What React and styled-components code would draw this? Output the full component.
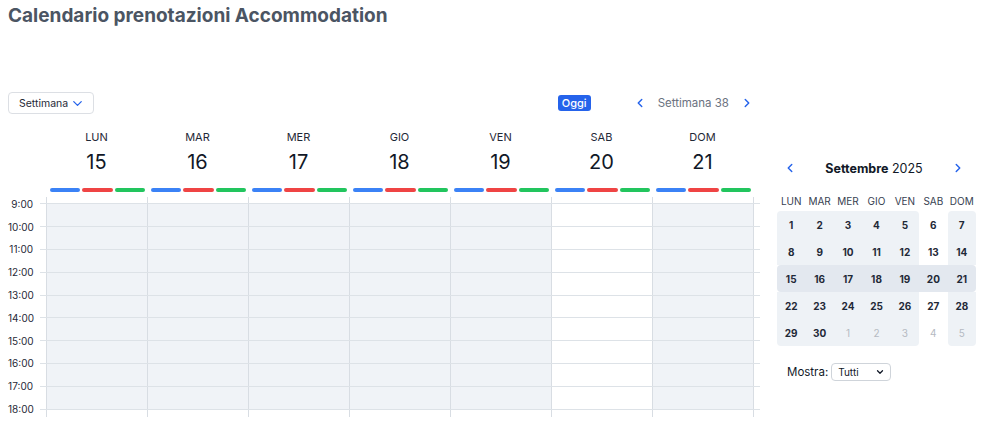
import React from 'react';
import styled, { createGlobalStyle } from 'styled-components';
import { ChevronDown, ChevronLeft, ChevronRight } from 'lucide-react';

const GlobalStyle = createGlobalStyle`
  body {
    margin: 0;
    background: #fff;
    font-family: Inter, "Noto Sans", "Liberation Sans", sans-serif;
    color: #111827;
  }
`;

const Page = styled.div`
  width: 984px;
  padding: 4px 8px 0;
  box-sizing: border-box;
`;

const Title = styled.h1`
  margin: 0;
  font-size: 19px;
  line-height: 24px;
  font-weight: 700;
  color: #4b5563;
`;

const Main = styled.div`
  display: flex;
  align-items: flex-start;
  gap: 17px;
  margin-top: 64px;
`;

const Schedule = styled.div`
  width: 752px;
`;

const Toolbar = styled.div`
  display: flex;
  align-items: center;
  height: 22px;
  padding-right: 6px;
`;

const ViewSelect = styled.div`
  display: flex;
  align-items: center;
  justify-content: space-between;
  width: 86px;
  height: 22px;
  box-sizing: border-box;
  padding: 0 8px 0 10px;
  border: 1px solid #dcdfe4;
  border-radius: 4px;
  font-size: 10.5px;
  color: #1f2937;
`;

const TodayButton = styled.button`
  margin-left: auto;
  height: 16px;
  padding: 0 4px;
  border: none;
  border-radius: 3px;
  background: #2563eb;
  color: #fff;
  font-family: inherit;
  font-size: 11px;
  font-weight: 500;
  line-height: 16px;
`;

const WeekNav = styled.div`
  display: flex;
  align-items: center;
  gap: 11px;
  margin-left: 42px;
  color: #2563eb;
`;

const WeekLabel = styled.span`
  font-size: 11.5px;
  color: #6b7280;
`;

const HeaderRow = styled.div`
  display: flex;
  margin-left: 38px;
`;

const DayHead = styled.div`
  width: 101px;
  padding-top: 16px;
  display: flex;
  flex-direction: column;
  align-items: center;
`;

const DayName = styled.div`
  font-size: 11px;
  line-height: 14px;
  color: #1f2937;
`;

const DayNumber = styled.div`
  margin-top: 6px;
  font-size: 20px;
  line-height: 24px;
  color: #111827;
`;

const Bars = styled.div`
  align-self: stretch;
  display: flex;
  gap: 2px;
  margin-top: 14px;
  padding: 0 2px 0 4px;
`;

const Bar = styled.div`
  flex: 1;
  height: 3.5px;
  border-radius: 2px;
  background: ${p => p.$color};
`;

const Body = styled.div`
  display: grid;
  margin-top: 1px;
  & > * {
    grid-area: 1 / 1;
  }
`;

const Columns = styled.div`
  display: flex;
  margin: 4px 0 3px 38px;
`;

const DayCol = styled.div`
  width: 101px;
  box-sizing: border-box;
  display: flex;
  flex-direction: column;
  border-left: 1px solid #d8dde3;
  &:last-child {
    width: 102px;
    border-right: 1px solid #d8dde3;
  }
`;

const Shade = styled.div`
  flex: 1;
  margin: 7px 0 8px;
  background: ${p => (p.$free ? 'transparent' : '#f0f3f7')};
`;

const Hours = styled.div`
  display: flex;
  flex-direction: column;
`;

const HourRow = styled.div`
  display: flex;
  align-items: center;
  height: 22.8px;
`;

const TimeLabel = styled.div`
  width: 32px;
  box-sizing: border-box;
  padding-right: 7px;
  text-align: right;
  font-size: 10px;
  color: #1f2937;
`;

const HourLine = styled.div`
  width: 720px;
  height: 1px;
  background: #dde2e7;
`;

const Side = styled.div`
  width: 199px;
  padding-top: 66px;
`;

const MonthHeader = styled.div`
  display: flex;
  align-items: center;
  justify-content: space-between;
  height: 20px;
  padding: 0 11px 0 6px;
  color: #2563eb;
`;

const MonthTitle = styled.div`
  font-size: 12.5px;
  color: #111827;
  b {
    font-weight: 700;
  }
`;

const WeekdayRow = styled.div`
  display: grid;
  grid-template-columns: repeat(7, 1fr);
  margin-top: 13px;
  font-size: 10px;
  line-height: 20px;
  text-align: center;
  color: #374151;
`;

const DaysGrid = styled.div`
  display: grid;
  grid-template-columns: repeat(7, 1fr);
  grid-auto-rows: 27px;
`;

const DayCell = styled.div`
  display: flex;
  align-items: center;
  justify-content: center;
  font-size: 10px;
  font-weight: ${p => (p.$muted ? 400 : 700)};
  color: ${p => (p.$muted ? '#b5bac2' : '#1f2937')};
  background: ${p => p.$bg};
  border-radius: ${p => p.$radius};
`;

const FilterRow = styled.div`
  display: flex;
  align-items: center;
  gap: 3px;
  margin-top: 17px;
  padding-left: 10px;
  font-size: 11.5px;
  color: #111827;
`;

const FilterSelect = styled.div`
  display: flex;
  align-items: center;
  justify-content: space-between;
  width: 60px;
  height: 18px;
  box-sizing: border-box;
  padding: 0 5px 0 6px;
  border: 1px solid #cfd4da;
  border-radius: 4px;
  font-size: 10px;
  color: #111827;
`;

const days = [
  ['LUN', 15], ['MAR', 16], ['MER', 17], ['GIO', 18],
  ['VEN', 19], ['SAB', 20], ['DOM', 21],
];

const hours = ['9:00', '10:00', '11:00', '12:00', '13:00', '14:00', '15:00', '16:00', '17:00', '18:00'];

const weeks = [
  [1, 2, 3, 4, 5, 6, 7],
  [8, 9, 10, 11, 12, 13, 14],
  [15, 16, 17, 18, 19, 20, 21],
  [22, 23, 24, 25, 26, 27, 28],
  [29, 30, -1, -2, -3, -4, -5],
];

function cellStyle(row, col) {
  if (row === 2) {
    const r = col === 0 ? '4px 0 0 4px' : col === 6 ? '0 4px 4px 0' : '0';
    return { bg: '#e3e8ef', radius: r };
  }
  if (col === 5) return { bg: '#fff', radius: '0' };
  const top = row === 0;
  const bottom = row === 4;
  let tl = 0, tr = 0, br = 0, bl = 0;
  if (top && (col === 0 || col === 6)) tl = 4;
  if (top && (col === 4 || col === 6)) tr = 4;
  if (bottom && (col === 0 || col === 6)) bl = 4;
  if (bottom && (col === 4 || col === 6)) br = 4;
  return { bg: '#eef2f6', radius: `${tl}px ${tr}px ${br}px ${bl}px` };
}

const App = () => {
  return (
    <Page>
      <GlobalStyle />
      <Title>Calendario prenotazioni Accommodation</Title>
      <Main>
        <Schedule>
          <Toolbar>
            <ViewSelect>
              Settimana
              <ChevronDown size={15} strokeWidth={2} color="#2563eb" />
            </ViewSelect>
            <TodayButton>Oggi</TodayButton>
            <WeekNav>
              <ChevronLeft size={14} strokeWidth={2.5} />
              <WeekLabel>Settimana 38</WeekLabel>
              <ChevronRight size={14} strokeWidth={2.5} />
            </WeekNav>
          </Toolbar>

          <HeaderRow>
            {days.map(([name, num]) => (
              <DayHead key={name}>
                <DayName>{name}</DayName>
                <DayNumber>{num}</DayNumber>
                <Bars>
                  <Bar $color="#3b82f6" />
                  <Bar $color="#ef4444" />
                  <Bar $color="#22c55e" />
                </Bars>
              </DayHead>
            ))}
          </HeaderRow>

          <Body>
            <Columns>
              {days.map(([name]) => (
                <DayCol key={name}>
                  <Shade $free={name === 'SAB'} />
                </DayCol>
              ))}
            </Columns>
            <Hours>
              {hours.map(h => (
                <HourRow key={h}>
                  <TimeLabel>{h}</TimeLabel>
                  <HourLine />
                </HourRow>
              ))}
            </Hours>
          </Body>
        </Schedule>

        <Side>
          <MonthHeader>
            <ChevronLeft size={14} strokeWidth={2.5} />
            <MonthTitle><b>Settembre</b> 2025</MonthTitle>
            <ChevronRight size={14} strokeWidth={2.5} />
          </MonthHeader>
          <WeekdayRow>
            {days.map(([name]) => <div key={name}>{name}</div>)}
          </WeekdayRow>
          <DaysGrid>
            {weeks.map((week, r) =>
              week.map((d, c) => {
                const s = cellStyle(r, c);
                return (
                  <DayCell key={`${r}-${c}`} $bg={s.bg} $radius={s.radius} $muted={d < 0}>
                    {Math.abs(d)}
                  </DayCell>
                );
              })
            )}
          </DaysGrid>
          <FilterRow>
            Mostra:
            <FilterSelect>
              Tutti
              <ChevronDown size={10} strokeWidth={3} />
            </FilterSelect>
          </FilterRow>
        </Side>
      </Main>
    </Page>
  );
};

export default App;
